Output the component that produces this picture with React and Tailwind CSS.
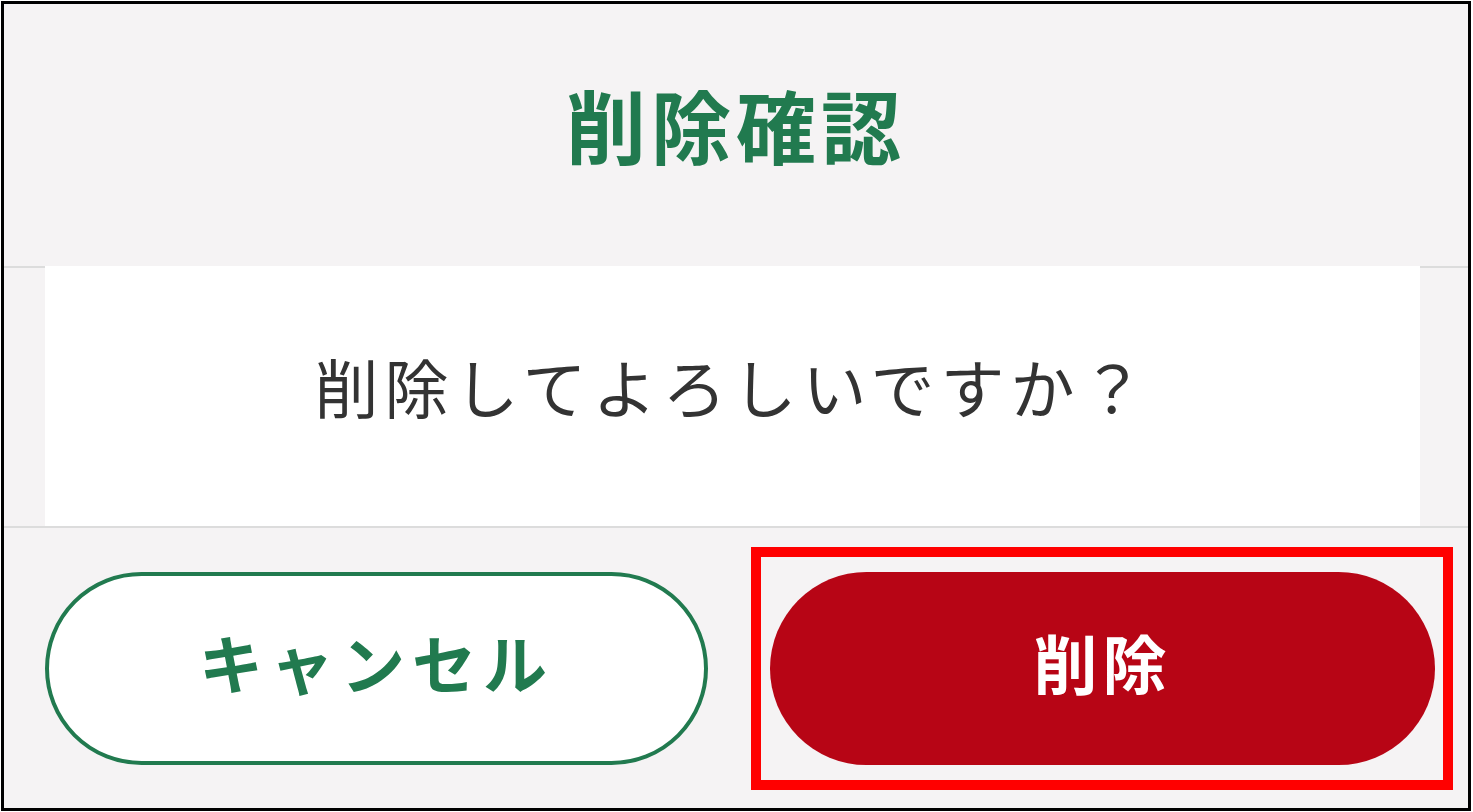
export default function App() {
  const font = { fontFamily: '"Noto Sans CJK JP", "Noto Sans", sans-serif' };

  return (
    <div className="w-[1473px] h-[812px] bg-white p-[1px]" style={font}>
      <div className="w-[1470px] h-[810px] border-[3px] border-black bg-[#f5f3f4] flex flex-col">
        {/* Title */}
        <div className="h-[262px] flex items-center justify-center pb-[24px]">
          <h2 className="text-[80px] leading-none font-bold text-[#217a4f] tracking-[5px]">
            削除確認
          </h2>
        </div>

        {/* Body */}
        <div className="flex h-[262px]">
          <div className="w-[41px] border-y-2 border-[#dcdcdc]"></div>
          <div className="flex-1 bg-white border-b-2 border-[#dcdcdc] flex items-center justify-center pb-[22px]">
            <p className="text-[64px] leading-none text-[#333333] tracking-[6px]">
              削除してよろしいですか？
            </p>
          </div>
          <div className="w-[48px] border-y-2 border-[#dcdcdc]"></div>
        </div>

        {/* Buttons */}
        <div className="flex-1 flex items-center pl-[41px]">
          <button className="w-[663px] h-[193px] rounded-full border-[4px] border-[#217a4f] bg-white flex items-center justify-center pb-[14px]">
            <span className="text-[64px] leading-none font-bold text-[#217a4f] tracking-[7px]">
              キャンセル
            </span>
          </button>
          <div className="ml-[43px] w-[702px] border-[10px] border-[#ff0000] pl-[9px] pr-[8px] pt-[15px] pb-[15px]">
            <button className="w-[665px] h-[193px] rounded-full bg-[#b70515] flex items-center justify-center pb-[14px]">
              <span className="text-[64px] leading-none font-bold text-white tracking-[5px]">
                削除
              </span>
            </button>
          </div>
        </div>
      </div>
    </div>
  );
}
